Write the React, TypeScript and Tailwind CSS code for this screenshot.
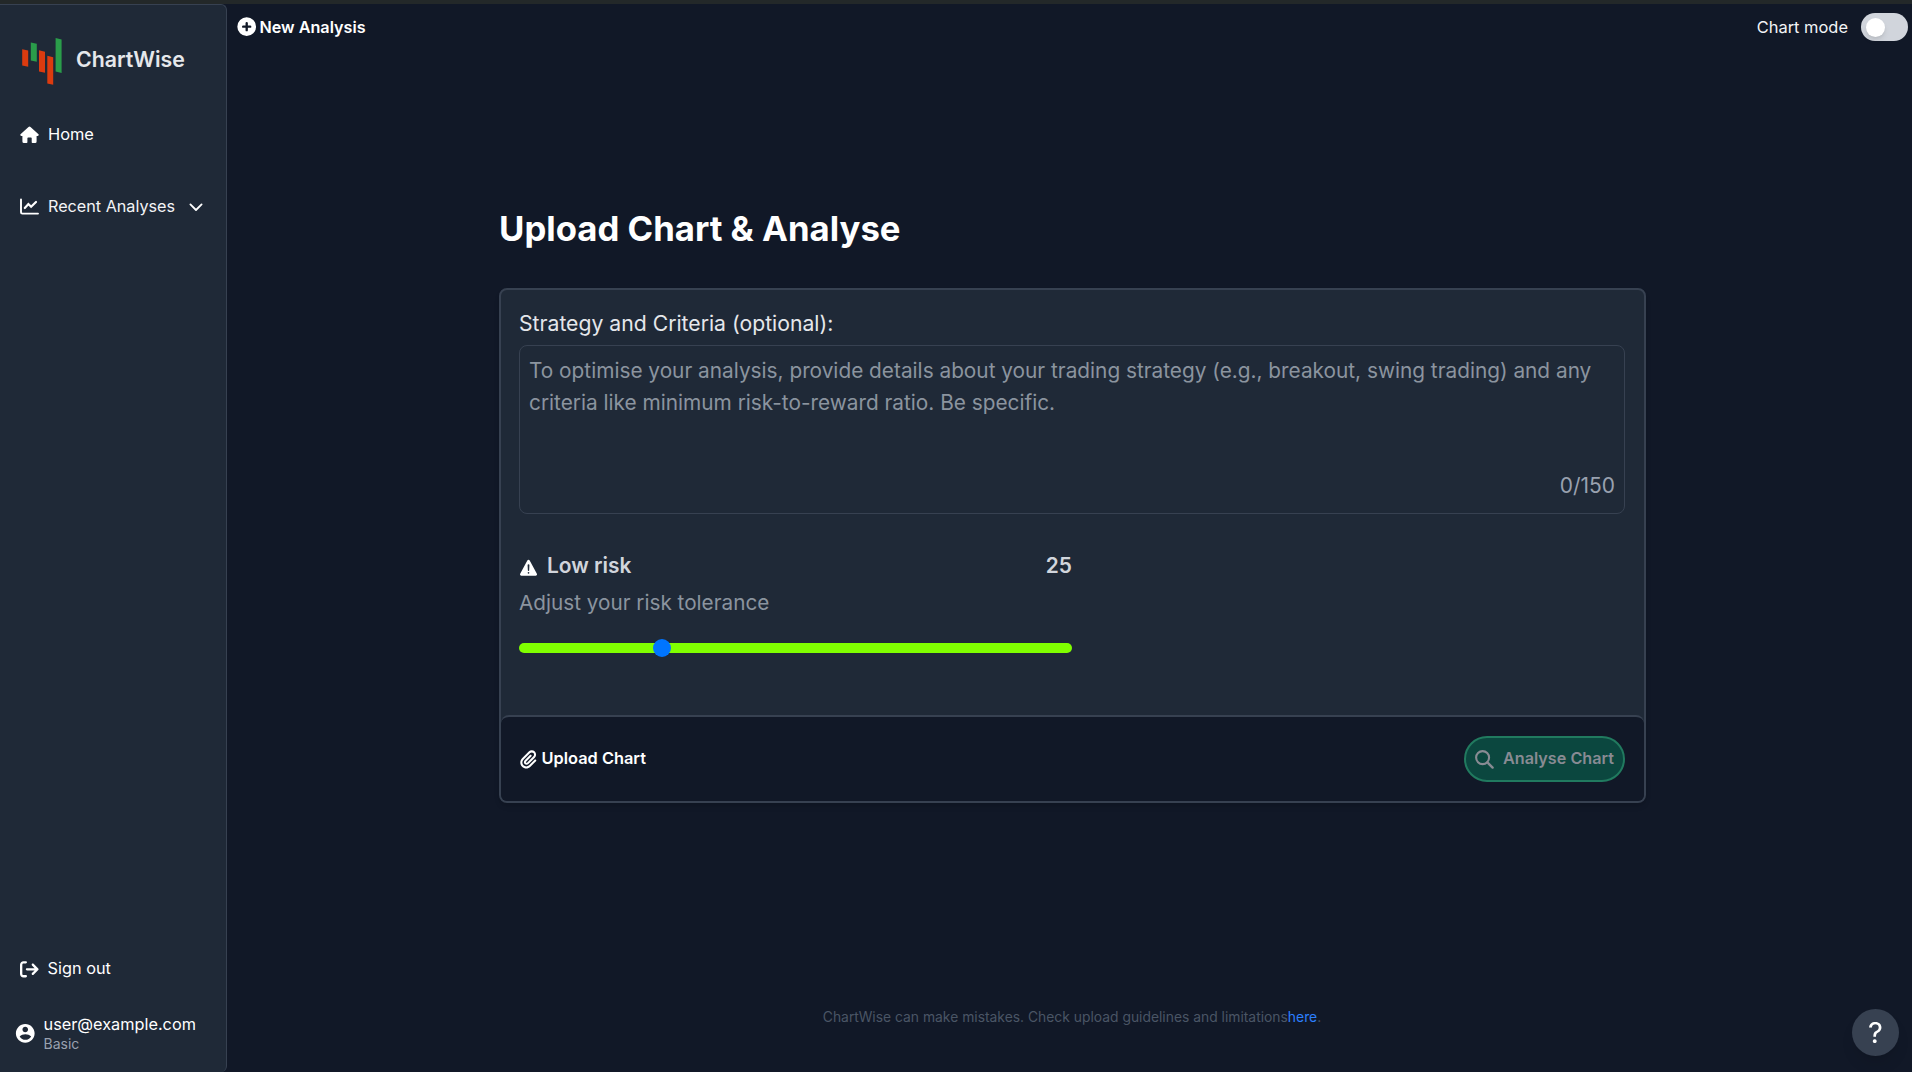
import React from "react";
import { FaArrowRightFromBracket, FaPaperclip } from "react-icons/fa6";
import { IoWarning } from "react-icons/io5";
import { RiAccountCircleFill } from "react-icons/ri";
import { HiPlusCircle } from "react-icons/hi";

function Logo() {
  return (
    <svg width="42" height="50" viewBox="0 0 42 50" className="shrink-0">
      <g fill="#dc3b0f">
        <path d="M1.2 12.2L7.2 13.4V29.8L1.2 28.4Z" />
        <path d="M18 13.3L24 14.7V35.8L18 34.4Z" />
        <path d="M26.3 18.8L32.2 20.2V47.8L26.3 46.4Z" />
      </g>
      <g fill="#2a9d4a">
        <path d="M9.8 5.5L15.8 6.8V24.8L9.8 23.4Z" />
        <path d="M34.6 1L40.6 2.4V36L34.6 34.6Z" />
      </g>
    </svg>
  );
}

function HomeIcon() {
  return (
    <svg width="19" height="17" viewBox="0 0 19 17" fill="white" className="mr-[9px] shrink-0">
      <path d="M10.5.9L18.5 8.2Q19.3 9.7 17.7 10H16.6V15.5Q16.6 17 15.2 17H12.4Q11.7 17 11.7 16.2V12.3Q11.7 11.5 11 11.5H8.2Q7.4 11.5 7.4 12.3V16.2Q7.4 17 6.6 17H3.9Q2.4 17 2.4 15.5V10H1.3Q-.3 9.7.5 8.2L8.5.9Q9.5 0 10.5.9Z" />
    </svg>
  );
}

function ChartIcon() {
  return (
    <svg width="19" height="17" viewBox="0 0 19 17" fill="none" stroke="white" strokeLinecap="round" strokeLinejoin="round" className="shrink-0">
      <path d="M1 1.4V14.2Q1 15.6 2.4 15.6H18" strokeWidth="1.9" />
      <path d="M4.8 10L8.4 6L11.1 8.7L16 4" strokeWidth="2.2" strokeLinejoin="miter" />
    </svg>
  );
}

function SearchIcon() {
  return (
    <svg width="19" height="19" viewBox="0 0 19 19" fill="none" stroke="currentColor" strokeLinecap="round" className="shrink-0">
      <circle cx="7.6" cy="7.6" r="6.5" strokeWidth="2.1" />
      <path d="M12.4 12.4L17.6 17.6" strokeWidth="2.4" />
    </svg>
  );
}

function Sidebar() {
  return (
    <aside className="flex w-[227px] shrink-0 flex-col rounded-r-md border-t border-r border-[#374151] bg-[#1f2937] text-white">
      <div className="mt-8 ml-[21px] flex h-[50px] items-center">
        <Logo />
        <span className="ml-[13px] pb-[6px] text-[21.3px] leading-7 font-semibold text-gray-200">ChartWise</span>
      </div>
      <nav className="mt-[35px] flex flex-col gap-12">
        <a className="flex h-6 items-center pl-5 text-[16.4px]">
          <HomeIcon />
          Home
        </a>
        <a className="flex h-6 items-center pl-5 text-[16.18px] text-gray-100">
          <ChartIcon />
          <span className="ml-[9px]">Recent Analyses</span>
          <svg width="14" height="9" viewBox="0 0 14 9" fill="none" stroke="white" strokeWidth="1.8" strokeLinecap="round" strokeLinejoin="round" className="mt-[3px] ml-[14px]">
            <path d="M1.4 1.4L7 7L12.6 1.4" />
          </svg>
        </a>
      </nav>
      <div className="mt-auto flex flex-col pb-[19px]">
        <a className="flex h-6 items-center pl-5 text-[16.3px]">
          <FaArrowRightFromBracket size={18.6} className="mt-0.5 mr-[9px]" />
          Sign out
        </a>
        <div className="mt-[34px] flex items-center pl-[14px]">
          <RiAccountCircleFill size={22.5} />
          <div className="ml-[7px] flex flex-col">
            <span className="text-[16.3px] leading-[21px]">user@example.com</span>
            <span className="text-[14px] leading-[18px] text-gray-400">Basic</span>
          </div>
        </div>
      </div>
    </aside>
  );
}

function TopBar() {
  return (
    <header className="flex h-[46px] items-center justify-between pr-1 pl-[7.5px]">
      <button className="flex items-center text-[16.2px] font-semibold">
        <HiPlusCircle size={23.4} className="mr-[1.5px]" />
        New Analysis
      </button>
      <label className="flex items-center text-[16.45px] text-gray-100">
        Chart mode
        <span className="ml-[13px] flex h-7 w-[47px] items-center rounded-full bg-gray-300 pl-[5px]">
          <span className="size-[19px] rounded-full bg-white shadow-md" />
        </span>
      </label>
    </header>
  );
}

function RiskSlider() {
  return (
    <div className="mt-[38px] w-[553px]">
      <div className="flex h-[28px] items-center text-[20.92px] font-semibold text-gray-300">
        <IoWarning size={21.5} className="mt-[3px] -ml-[1.5px] text-white" />
        <span className="ml-2">Low risk</span>
        <span className="ml-auto">25</span>
      </div>
      <p className="mt-[9px] text-[20.72px] leading-7 text-[#8b949f]">Adjust your risk tolerance</p>
      <div className="relative mt-[26px] h-[10px] rounded-full bg-[#80ff00]">
        <span className="absolute -top-1 left-[134px] size-[18px] rounded-full bg-[#0075ff]" />
      </div>
    </div>
  );
}

export default function App() {
  return (
    <div className="flex h-[1072px] w-full flex-col overflow-hidden bg-[#111827] font-['Inter',sans-serif] text-white">
      <div className="h-1 shrink-0 bg-[#232829]" />
      <div className="flex min-h-0 flex-1">
        <Sidebar />
        <main className="flex min-w-0 flex-1 flex-col">
          <TopBar />
          <section className="mt-[155px] ml-[272px] w-[1147px]">
            <h1 className="text-[34.7px] leading-[46px] font-bold">Upload Chart &amp; Analyse</h1>
            <div className="mt-[37px] flex h-[515px] flex-col rounded-lg border-2 border-[#374151] bg-[#1f2937] shadow-md">
              <div className="flex-1 pt-[17px] pr-[19px] pl-[18px]">
                <label className="block text-[21.2px] leading-8 text-gray-200">Strategy and Criteria (optional):</label>
                <div className="mt-[6px] flex h-[169px] flex-col justify-between rounded-lg border border-[#374151] px-[9px] pt-[9px] pb-[11px] text-[20.8px] leading-8 text-[#8b949f]">
                  <p className="whitespace-nowrap">
                    To optimise your analysis, provide details about your trading strategy (e.g., breakout, swing trading) and any
                    <br />
                    criteria like minimum risk-to-reward ratio. Be specific.
                  </p>
                  <span className="text-right text-[20.95px] text-gray-400">0/150</span>
                </div>
                <RiskSlider />
              </div>
              <div className="flex h-[86px] shrink-0 items-center justify-between rounded-t-lg rounded-b-md border-t-2 border-[#374151] bg-[#111827] pr-[19px] pl-[18px]">
                <button className="flex items-center pb-px text-[16.35px] font-semibold">
                  <FaPaperclip size={18.6} className="mt-0.5 mr-[4px]" />
                  Upload Chart
                </button>
                <button className="flex h-[46px] w-[161px] items-center rounded-full border-2 border-[#217a5f] bg-[#0b473f] pb-px pl-[9px] text-[16.2px] font-semibold text-[#888b93]">
                  <span className="mt-[2px] mr-[9px]">
                    <SearchIcon />
                  </span>
                  Analyse Chart
                </button>
              </div>
            </div>
          </section>
          <p className="mt-[204px] ml-[5px] text-center text-[13.87px] leading-5 text-gray-600">
            ChartWise can make mistakes. Check upload guidelines and limitations<a className="text-blue-500">here</a>.
          </p>
        </main>
      </div>
      <button className="fixed right-[13px] bottom-4 flex size-[47px] items-center justify-center rounded-full bg-[#374151] text-[29px] shadow-lg">?</button>
    </div>
  );
}
